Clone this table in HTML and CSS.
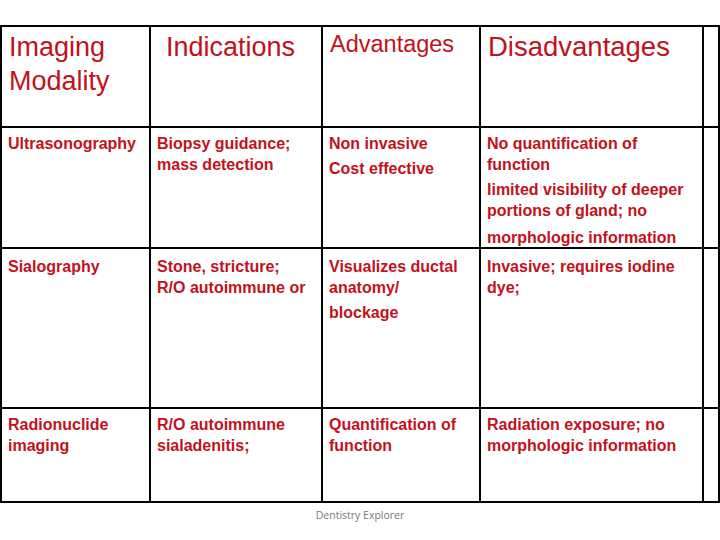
FILE: index.html
```html
<!DOCTYPE html>
<html>
<head>
<meta charset="utf-8">
<link rel="stylesheet" href="styles.css">
</head>
<body>
<div class="page">
  <div class="grid">
    <div class="cell head"><p>Imaging<br>Modality</p></div>
    <div class="cell head head-ind"><p>Indications</p></div>
    <div class="cell head head-adv"><p>Advantages</p></div>
    <div class="cell head head-dis"><p>Disadvantages</p></div>
    <div class="cell"></div>

    <div class="cell body"><p>Ultrasonography</p></div>
    <div class="cell body"><p>Biopsy guidance;<br>mass detection</p></div>
    <div class="cell body"><p>Non invasive</p><p class="para">Cost effective</p></div>
    <div class="cell body"><p>No quantification of<br>function</p><p class="para">limited visibility of deeper<br>portions of gland; no</p><p class="para loose">morphologic information</p></div>
    <div class="cell"></div>

    <div class="cell body r3"><p>Sialography</p></div>
    <div class="cell body r3"><p>Stone, stricture;<br>R/O autoimmune or</p></div>
    <div class="cell body r3"><p>Visualizes ductal<br>anatomy/</p><p class="para">blockage</p></div>
    <div class="cell body r3"><p>Invasive; requires iodine<br>dye;</p></div>
    <div class="cell"></div>

    <div class="cell body"><p>Radionuclide<br>imaging</p></div>
    <div class="cell body"><p>R/O autoimmune<br>sialadenitis;</p></div>
    <div class="cell body"><p>Quantification of<br>function</p></div>
    <div class="cell body"><p>Radiation exposure; no<br>morphologic information</p></div>
    <div class="cell"></div>
  </div>
  <div class="footer">Dentistry Explorer</div>
</div>
</body>
</html>
```

FILE: styles.css
```css
html, body {
  margin: 0;
  padding: 0;
  background: #ffffff;
}

.page {
  width: 720px;
  height: 540px;
  padding-top: 25px;
  box-sizing: border-box;
  display: flex;
  flex-direction: column;
  align-items: center;
}

.grid {
  display: grid;
  grid-template-columns: 147px 170px 156px 221px 14px;
  grid-template-rows: 99px 119px 158px 92px;
  gap: 2px;
  padding: 2px;
  background: #000000;
  width: 720px;
  box-sizing: border-box;
}

.cell {
  background: #ffffff;
  color: #c3111b;
  font-family: "Liberation Sans", Arial, sans-serif;
  padding-left: 6px;
  overflow: hidden;
}

.cell p {
  margin: 0;
  white-space: nowrap;
}

.head {
  font-size: 27px;
  line-height: 34px;
  padding-top: 3px;
  padding-left: 7px;
}

.head-ind {
  padding-left: 15px;
}

.head-adv {
  font-size: 23.5px;
  line-height: 28px;
  padding-top: 3px;
  padding-left: 7px;
}

.head-dis {
  font-size: 27.5px;
  padding-left: 7px;
}

.body {
  font-size: 16px;
  font-weight: bold;
  line-height: 21px;
  padding-top: 5px;
}

.r3 {
  padding-top: 7px;
}

.para {
  margin-top: 4px !important;
}

.para.loose {
  margin-top: 6px !important;
}

.footer {
  margin-top: 5px;
  font-family: "Open Sans", sans-serif;
  font-size: 10.5px;
  line-height: 14px;
  color: #7a7a7a;
}
```
